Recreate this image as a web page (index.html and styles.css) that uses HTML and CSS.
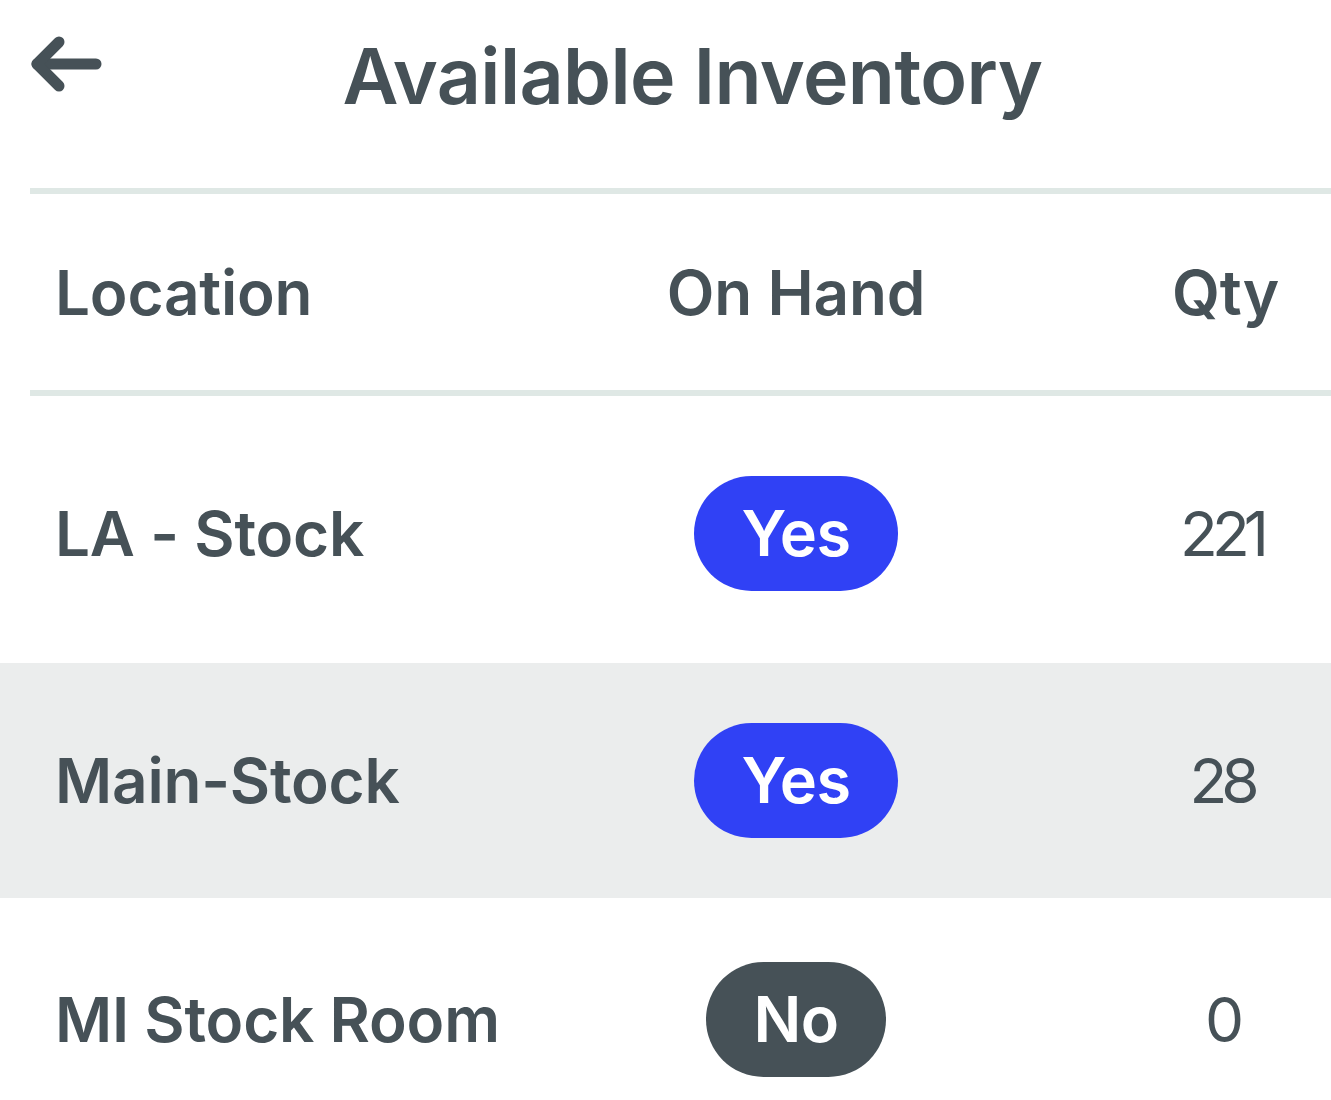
FILE: index.html
```html
<!DOCTYPE html>
<html lang="en">
<head>
<meta charset="utf-8">
<title>Available Inventory</title>
<link rel="stylesheet" href="styles.css">
</head>
<body>
<div class="screen">
  <header class="topbar">
    <button class="back" aria-label="Back">
      <svg width="74" height="56" viewBox="0 0 74 56" fill="none" stroke="#465157" stroke-width="11" stroke-linecap="round" stroke-linejoin="round">
        <path d="M7 28 H66"/>
        <path d="M29 6 L7 28 L29 50"/>
      </svg>
    </button>
    <h1 class="title">Available Inventory</h1>
  </header>
  <div class="table">
    <div class="row head">
      <div class="cell loc">Location</div>
      <div class="cell mid">On Hand</div>
      <div class="cell qty">Qty</div>
    </div>
    <div class="row first">
      <div class="cell loc">LA - Stock</div>
      <div class="cell mid"><span class="pill yes">Yes</span></div>
      <div class="cell qty num">221</div>
    </div>
    <div class="row alt">
      <div class="cell loc">Main-Stock</div>
      <div class="cell mid"><span class="pill yes">Yes</span></div>
      <div class="cell qty num">28</div>
    </div>
    <div class="row last">
      <div class="cell loc">MI Stock Room</div>
      <div class="cell mid"><span class="pill no">No</span></div>
      <div class="cell qty num">0</div>
    </div>
  </div>
</div>
</body>
</html>
```

FILE: styles.css
```css
html, body {
  margin: 0;
  padding: 0;
  background: #ffffff;
}
body {
  font-family: Inter, "Noto Sans", sans-serif;
  color: #465157;
  overflow: hidden;
}
.screen {
  width: 1331px;
  height: 1100px;
}
.topbar {
  display: flex;
  align-items: flex-start;
  height: 188px;
  margin-left: 30px;
  border-bottom: 6px solid #dfe8e5;
  box-sizing: content-box;
}
.back {
  border: 0;
  background: none;
  padding: 0;
  margin-top: 36px;
  width: 74px;
  height: 56px;
  display: block;
  cursor: pointer;
}
.back svg { display: block; }
.title {
  margin: 0;
  margin-top: 28px;
  flex: 1;
  text-align: center;
  padding-right: 50px;
  font-size: 77px;
  font-weight: 600;
  line-height: 96px;
  letter-spacing: -0.6px;
}
.table {
  display: flex;
  flex-direction: column;
}
.row {
  display: grid;
  grid-template-columns: minmax(0, 1fr) 400px 211px;
  column-gap: 124px;
  align-items: center;
  padding-left: 55px;
  height: 235px;
  box-sizing: border-box;
  font-size: 62px;
  font-weight: 600;
  letter-spacing: -0.2px;
}
.row.head {
  height: 196px;
  margin-left: 30px;
  padding-left: 25px;
  border-bottom: 6px solid #dfe8e5;
  box-sizing: content-box;
}
.row.first {
  height: 267px;
  padding-top: 8px;
}
.row.alt {
  background: #ebeded;
}
.row.last {
  padding-top: 8px;
}
.cell {
  white-space: nowrap;
}
.mid, .qty {
  text-align: center;
}
.num {
  font-weight: 400;
  letter-spacing: -6px;
  text-indent: -8px;
}
.pill {
  display: inline-block;
  height: 115px;
  line-height: 115px;
  padding: 0 47px;
  border-radius: 58px;
  color: #ffffff;
  font-size: 63px;
  font-weight: 600;
  letter-spacing: -0.5px;
}
.pill.yes { background: #3041f5; }
.pill.no { background: #465157; }
```
